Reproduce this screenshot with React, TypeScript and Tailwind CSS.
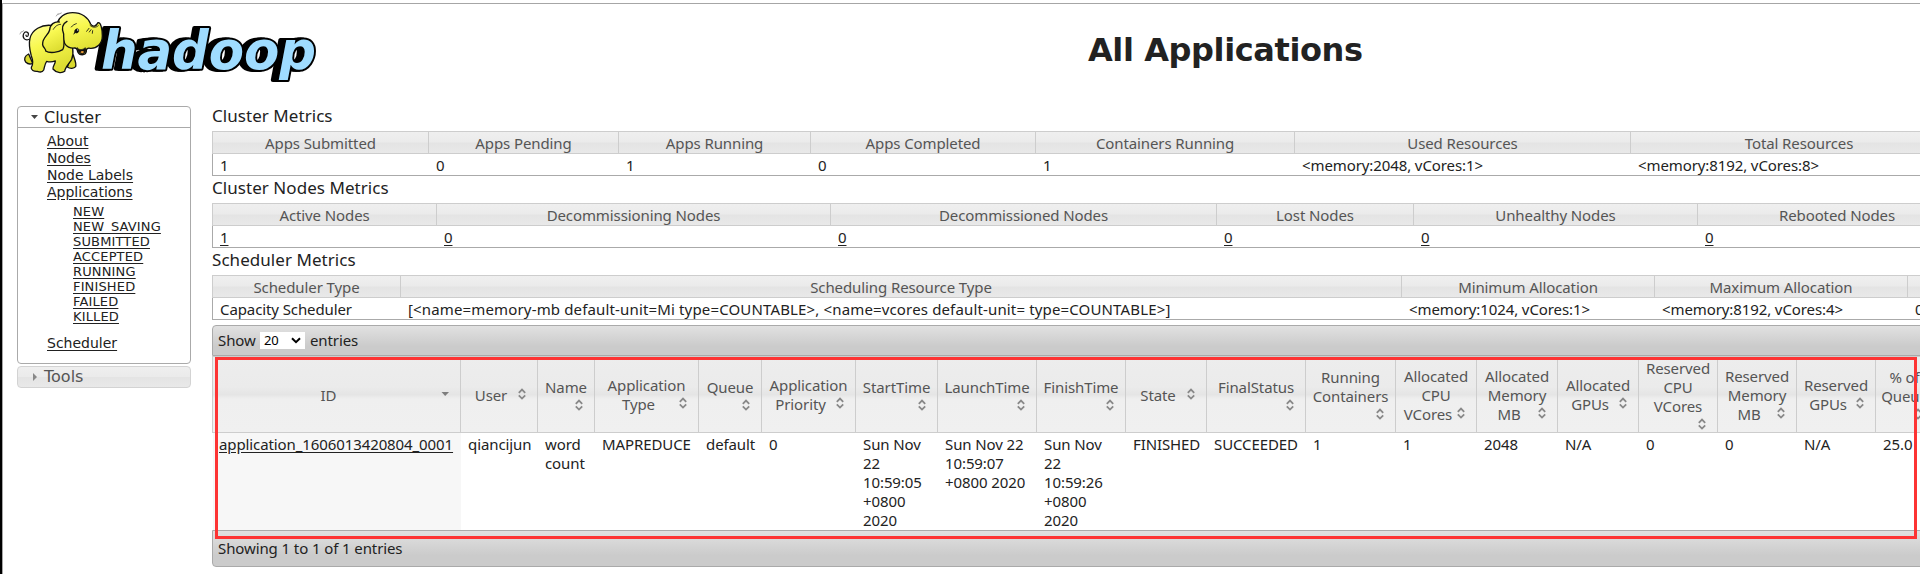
import type { ReactNode } from 'react';

const glass = 'bg-[linear-gradient(#efefef_0%,#ebebeb_48%,#e4e4e4_52%,#e9e9e9_100%)]';
const bar = 'bg-[linear-gradient(#e1e1e1_0%,#cbcbcb_70%,#cbcbcb_100%)]';

type Col = { w: string; head: string; value: string; link?: boolean; wide?: boolean };

const clusterMetrics: Col[] = [
  { w: 'w-[216px]', head: 'Apps Submitted', value: '1' },
  { w: 'w-[190px]', head: 'Apps Pending', value: '0' },
  { w: 'w-[192px]', head: 'Apps Running', value: '1' },
  { w: 'w-[225px]', head: 'Apps Completed', value: '0' },
  { w: 'w-[259px]', head: 'Containers Running', value: '1' },
  { w: 'w-[336px]', head: 'Used Resources', value: '<memory:2048, vCores:1>' },
  { w: 'w-[337px]', head: 'Total Resources', value: '<memory:8192, vCores:8>' },
];

const nodeMetrics: Col[] = [
  { w: 'w-[224px]', head: 'Active Nodes', value: '1', link: true },
  { w: 'w-[394px]', head: 'Decommissioning Nodes', value: '0', link: true },
  { w: 'w-[386px]', head: 'Decommissioned Nodes', value: '0', link: true },
  { w: 'w-[197px]', head: 'Lost Nodes', value: '0', link: true },
  { w: 'w-[284px]', head: 'Unhealthy Nodes', value: '0', link: true },
  { w: 'w-[279px]', head: 'Rebooted Nodes', value: '0', link: true },
];

const schedulerMetrics: Col[] = [
  { w: 'w-[188px]', head: 'Scheduler Type', value: 'Capacity Scheduler' },
  {
    w: 'w-[1001px]',
    head: 'Scheduling Resource Type',
    value: '[<name=memory-mb default-unit=Mi type=COUNTABLE>, <name=vcores default-unit= type=COUNTABLE>]',
    wide: true,
  },
  { w: 'w-[253px]', head: 'Minimum Allocation', value: '<memory:1024, vCores:1>' },
  { w: 'w-[253px]', head: 'Maximum Allocation', value: '<memory:8192, vCores:4>' },
  { w: 'w-[200px]', head: '', value: '0' },
];

type AppCol = { w: string; head: string[]; own?: boolean; sorted?: boolean; value: string[] };

const appCols: AppCol[] = [
  { w: 'w-[248px]', head: ['ID'], sorted: true, value: ['application_1606013420804_0001'] },
  { w: 'w-[77px]', head: ['User'], value: ['qiancijun'] },
  { w: 'w-[57px]', head: ['Name'], own: true, value: ['word', 'count'] },
  { w: 'w-[104px]', head: ['Application', 'Type'], value: ['MAPREDUCE'] },
  { w: 'w-[63px]', head: ['Queue'], own: true, value: ['default'] },
  { w: 'w-[94px]', head: ['Application', 'Priority'], value: ['0'] },
  { w: 'w-[82px]', head: ['StartTime'], own: true, value: ['Sun Nov', '22', '10:59:05', '+0800', '2020'] },
  { w: 'w-[99px]', head: ['LaunchTime'], own: true, value: ['Sun Nov 22', '10:59:07', '+0800 2020'] },
  { w: 'w-[89px]', head: ['FinishTime'], own: true, value: ['Sun Nov', '22', '10:59:26', '+0800', '2020'] },
  { w: 'w-[81px]', head: ['State'], value: ['FINISHED'] },
  { w: 'w-[99px]', head: ['FinalStatus'], own: true, value: ['SUCCEEDED'] },
  { w: 'w-[90px]', head: ['Running', 'Containers'], own: true, value: ['1'] },
  { w: 'w-[81px]', head: ['Allocated', 'CPU', 'VCores'], value: ['1'] },
  { w: 'w-[81px]', head: ['Allocated', 'Memory', 'MB'], value: ['2048'] },
  { w: 'w-[81px]', head: ['Allocated', 'GPUs'], value: ['N/A'] },
  { w: 'w-[79px]', head: ['Reserved', 'CPU', 'VCores'], own: true, value: ['0'] },
  { w: 'w-[79px]', head: ['Reserved', 'Memory', 'MB'], value: ['0'] },
  { w: 'w-[79px]', head: ['Reserved', 'GPUs'], value: ['N/A'] },
  { w: 'w-[58px]', head: ['% of', 'Queue'], own: true, value: ['25.0'] },
];

const states = ['NEW', 'NEW_SAVING', 'SUBMITTED', 'ACCEPTED', 'RUNNING', 'FINISHED', 'FAILED', 'KILLED'];

function SortIcon() {
  return (
    <svg className="h-4 w-4 shrink-0" viewBox="0 0 16 16" fill="none" stroke="#888" strokeWidth="1.8">
      <path d="M4.8 6.8 8 3.6l3.2 3.2M4.8 9.4 8 12.6l3.2-3.2" />
    </svg>
  );
}

function SortedIcon() {
  return (
    <svg className="h-4 w-4 shrink-0" viewBox="0 0 16 16" fill="#7d7d7d">
      <path d="M4.5 6h7.5L8.2 10z" />
    </svg>
  );
}

function MetricsTable({ title, cols }: { title: string; cols: Col[] }) {
  return (
    <section className="w-max">
      <h3 className="h-[27px] text-[17px] leading-[23px] tracking-[0.05px]">{title}</h3>
      <div className={`flex h-[23px] border-y border-l border-[#cdcdcd] text-[#555] ${glass}`}>
        {cols.map((c, i) => (
          <div key={i} className={`shrink-0 border-r border-[#cdcdcd] pt-px text-center leading-[21px] ${c.w}`}>
            {c.head}
          </div>
        ))}
      </div>
      <div className="flex h-[22px] border-b border-l border-[#aaa] bg-white">
        {cols.map((c, i) => (
          <div
            key={i}
            className={`shrink-0 pt-px pl-[7px] leading-[21px] whitespace-pre ${c.w} ${c.wide ? 'tracking-[0.15px]' : ''}`}
          >
            {c.link ? <a className="underline underline-offset-2">{c.value}</a> : c.value}
          </div>
        ))}
      </div>
    </section>
  );
}

function HeadCell({ col }: { col: AppCol }) {
  const last = col.head.length - 1;
  const icon = col.sorted ? <SortedIcon /> : <SortIcon />;
  return (
    <div className={`flex shrink-0 flex-col justify-center border-r border-[#cdcdcd] px-[7px] pt-px leading-[19px] whitespace-nowrap ${col.w}`}>
      {col.head.map((line, i) =>
        i === last && !col.own ? (
          <div key={i} className="flex h-[19px]">
            <span className="flex-1 text-center">{line}</span>
            {icon}
          </div>
        ) : (
          <div key={i} className="flex h-[19px] justify-center">
            <span>{line}</span>
          </div>
        ),
      )}
      {col.own && <div className="flex h-4 justify-end">{icon}</div>}
    </div>
  );
}

function Logo() {
  return (
    <svg className="block h-[88px] w-[330px]" viewBox="0 0 330 88">
      <g className="[filter:drop-shadow(-3px_0_0_#000)_drop-shadow(-3px_0_0_#000)]">
        <text
          x="101"
          y="68.5"
          textLength="215"
          lengthAdjust="spacingAndGlyphs"
          fontFamily="DejaVu Sans"
          fontWeight="700"
          fontStyle="italic"
          fontSize="53"
          fill="#9fdcff"
          stroke="#000"
          strokeWidth="4"
          strokeLinejoin="round"
          paintOrder="stroke"
        >
          hadoop
        </text>
      </g>
      <g transform="translate(10 0) scale(.3333)" stroke="#111" strokeWidth="4" strokeLinecap="round" strokeLinejoin="round">
        <defs>
          <linearGradient id="hide" x1="0" y1="0" x2="0.4" y2="1">
            <stop offset="0" stopColor="#ffff9a" />
            <stop offset=".45" stopColor="#f8f850" />
            <stop offset="1" stopColor="#dede32" />
          </linearGradient>
        </defs>
        <path d="M58 118C44 124 36 112 41 101C46 92 57 96 55 105C54 111 47 110 48 105" fill="none" strokeWidth="3.5" />
        <path d="M30 102l4-7M36 96l5-4M139 48l5-7M145 43l9-4" fill="none" stroke="#777" strokeWidth="2" />
        <path
          d="M56 162C44 167 41 178 47 186C53 192 62 193 68 190ZM180 168C178 185 176 194 172 201C180 207 192 206 197 200C200 189 194 180 190 165Z"
          fill="#d8d82c"
        />
        <path
          d="M122 76C95 74 66 88 60 115C55 135 60 152 64 168C69 180 70 192 64 202C62 210 72 215 82 214C90 217 98 216 101 210C104 200 105 190 110 184C119 187 128 186 136 183C136 193 127 200 129 207C138 218 155 221 164 214C165 202 178 190 185 178C190 166 190 158 188 145L160 80Z"
          fill="url(#hide)"
        />
        <path
          d="M142 70C146 52 164 38 188 38C216 38 235 53 242 72C248 82 258 80 264 68C272 66 277 86 277 108C277 132 260 146 241 145C232 143 228 147 229 155C226 167 209 168 203 155C202 148 201 144 194 144C181 146 168 139 164 130Z"
          fill="url(#hide)"
        />
        <path d="M202 144C209 152 219 149 226 143C232 150 224 163 215 162C207 161 203 153 202 144Z" fill="#111" strokeWidth="2" />
        <path d="M211 157c3-5 8-5 11-2-2 5-7 6-11 2Z" fill="#e89b35" stroke="none" />
        <path d="M148 66C133 64 120 73 119 90C115 106 98 112 98 131C95 138 109 148 107 153C119 161 146 157 158 149C166 137 160 119 161 102C156 89 154 73 171 64" fill="url(#hide)" />
        <path d="M130 88C137 76 146 73 152 73M240 76C247 83 258 84 265 77M184 81c4-6 10-8 15-10M237 85l-7 9M243 89l-5 7M248 92l-1 8" fill="none" strokeWidth="2.5" />
        <path d="M194 94C194 86 204 84 206 89C208 96 202 101 196 98L191 102" fill="#111" strokeWidth="2" />
        <circle cx="203" cy="90" r="2" fill="#fff" stroke="none" />
      </g>
    </svg>
  );
}

function Link({ children }: { children: ReactNode }) {
  return <a className="underline underline-offset-2">{children}</a>;
}

function Sidebar() {
  return (
    <nav className="ml-[14px] w-[174px] shrink-0 pt-[2px] font-['DejaVu_Sans',sans-serif] tracking-normal">
      <div className="h-[258px] rounded-[4px] border border-[#aaa] text-[14px] leading-[17px] text-[#212121]">
        <div className="flex h-[21px] items-center border-b border-[#aaa] pl-[13px] text-[16px]">
          <svg className="mr-[6px] h-2 w-[7px]" viewBox="0 0 7 8" fill="#454545">
            <path d="M0 2h7L3.5 6z" />
          </svg>
          <span>Cluster</span>
        </div>
        <ul className="mt-[5px] pl-[29px]">
          <li><Link>About</Link></li>
          <li><Link>Nodes</Link></li>
          <li><Link>Node Labels</Link></li>
          <li><Link>Applications</Link></li>
          <li>
            <ul className="mt-[3px] mb-[11px] pl-[26px] text-[13px] leading-[15px] tracking-[0.15px]">
              {states.map((s) => (
                <li key={s}><Link>{s}</Link></li>
              ))}
            </ul>
          </li>
          <li><Link>Scheduler</Link></li>
        </ul>
      </div>
      <div className={`mt-[2px] flex h-[22px] items-center rounded-[4px] border border-[#d3d3d3] pl-[15px] text-[16px] text-[#555] ${glass}`}>
        <svg className="mr-[7px] h-2 w-1" viewBox="0 0 4 8" fill="#888">
          <path d="M0 0v8l4-4z" />
        </svg>
        <span>Tools</span>
      </div>
    </nav>
  );
}

export default function App() {
  return (
    <div className="relative flex h-[574px] w-[1920px] overflow-hidden bg-white font-['Noto_Sans',sans-serif] text-[15px] tracking-[-0.1px] text-[#222]">
      <div className="w-[2px] shrink-0 bg-black" />
      <div className="mt-[3px] flex w-[1918px] flex-col border-t border-l border-[#a6a6a6]">
        <header className="-mt-[4px] -ml-[3px] flex h-[104px] shrink-0">
          <Logo />
          <h1 className="ml-[758px] pt-[31px] font-['DejaVu_Sans',sans-serif] text-[32px] leading-[38px] font-bold tracking-[-0.4px] whitespace-nowrap">
            All Applications
          </h1>
        </header>
        <div className="flex">
          <Sidebar />
          <main className="ml-[21px] w-[1708px] shrink-0 overflow-hidden">
            <MetricsTable title="Cluster Metrics" cols={clusterMetrics} />
            <MetricsTable title="Cluster Nodes Metrics" cols={nodeMetrics} />
            <MetricsTable title="Scheduler Metrics" cols={schedulerMetrics} />

            <div className="mt-[5px] w-[1740px]">
              <div className={`flex h-[31px] items-center rounded-t-[4px] border border-[#aaa] pl-[5px] ${bar}`}>
                <span className="w-[42px]">Show</span>
                <div className="flex h-[17px] w-[45px] items-center justify-between bg-white pr-[4px] pl-[4px] text-[13px] leading-[17px] text-black">
                  <span>20</span>
                  <svg className="h-[7px] w-[10px]" viewBox="0 0 10 7" fill="none" stroke="#000" strokeWidth="2">
                    <path d="M1 1.2 5 5.2 9 1.2" />
                  </svg>
                </div>
                <span className="ml-[5px]">entries</span>
              </div>

              <div className="flex h-[77px] border-y border-l border-[#cdcdcd] bg-[linear-gradient(#ededed_0%,#ebebeb_40%,#e5e5e5_50%,#efefef_56%,#f0f0f0_100%)] text-[#555]">
                {appCols.map((c, i) => (
                  <HeadCell key={i} col={c} />
                ))}
              </div>
              <div className="flex h-[97px] bg-white leading-[19px]">
                {appCols.map((c, i) => (
                  <div
                    key={i}
                    className={`shrink-0 pt-[2px] whitespace-nowrap ${c.w} ${c.sorted ? 'ml-px bg-[#f7f7f7] pl-[6px]' : 'pl-[7px]'}`}
                  >
                    {c.value.map((v, j) => (
                      <div key={j}>{c.sorted ? <Link>{v}</Link> : v}</div>
                    ))}
                  </div>
                ))}
              </div>

              <div className={`flex h-[37px] items-center rounded-b-[4px] border border-[#aaa] pl-[5px] ${bar}`}>
                Showing 1 to 1 of 1 entries
              </div>
            </div>
          </main>
        </div>
      </div>
      <div className="pointer-events-none absolute top-[357px] left-[215px] h-[182px] w-[1702px] border-[3px] border-[#fd3434]" />
    </div>
  );
}
